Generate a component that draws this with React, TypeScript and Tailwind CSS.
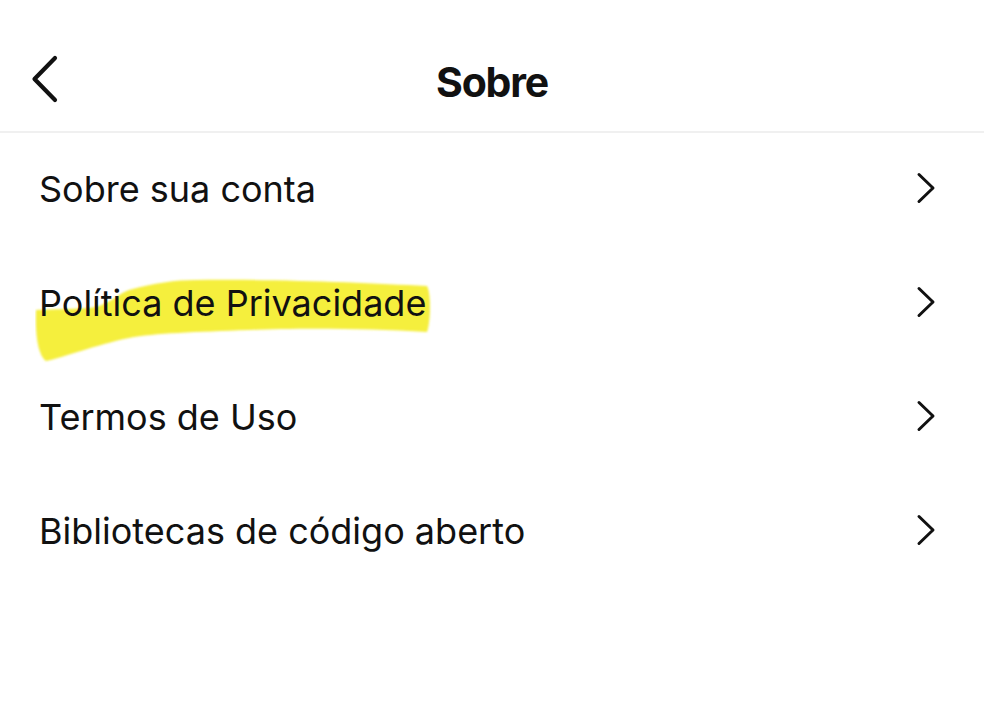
const items = [
  "Sobre sua conta",
  "Política de Privacidade",
  "Termos de Uso",
  "Bibliotecas de código aberto",
];

function BackIcon() {
  return (
    <svg className="absolute left-[31px] top-[55px] w-[28px] h-[48px]" viewBox="0 0 28 48" fill="none">
      <polyline points="24,3 3.5,24 24,45" stroke="#111" strokeWidth="4.2" strokeLinecap="round" strokeLinejoin="round" />
    </svg>
  );
}

function Chevron() {
  return (
    <svg className="w-[22px] h-[32px] mt-[-4px]" viewBox="0 0 22 32" fill="none">
      <polyline points="3,2.5 17,16 3,29.5" stroke="#111" strokeWidth="3" strokeLinecap="round" strokeLinejoin="round" />
    </svg>
  );
}

// marcador amarelo desenhado à mão
function Highlight() {
  return (
    <svg
      className="absolute left-[-4px] top-[-20px] w-[400px] h-[100px] pointer-events-none"
      viewBox="0 0 400 100"
    >
      <defs>
        <filter id="soft">
          <feGaussianBlur stdDeviation="1.3" />
        </filter>
      </defs>
      <path
        d="M1 45 C20 44 50 44 61 42 C75 38 85 28 94 25 C120 18 140 15 161 15 C250 14 330 18 392 21 C396 28 396 55 392 67 C330 63 260 63 214 65 C160 67 120 68 94 73 C60 80 30 92 11 96 C3 90 0 70 1 45 Z"
        fill="#f5ef3c"
        filter="url(#soft)"
      />
    </svg>
  );
}

export default function App() {
  return (
    <div className="w-[984px] h-[726px] bg-white font-['Inter','Roboto',sans-serif] text-[#111]">
      <header className="relative h-[133px] flex justify-center pt-[62px] border-b-2 border-[#f0f0f0]">
        <BackIcon />
        <h1 className="text-[41px] font-bold leading-none tracking-[-1.2px]">Sobre</h1>
      </header>
      <ul>
        {items.map((label, i) => (
          <li key={label} className="h-[114px] flex items-center justify-between pl-[39px] pr-[46px]">
            <span className="relative text-[36px] leading-none mt-[-2px]">
              {i === 1 && <Highlight />}
              <span className="relative">{label}</span>
            </span>
            <Chevron />
          </li>
        ))}
      </ul>
    </div>
  );
}
